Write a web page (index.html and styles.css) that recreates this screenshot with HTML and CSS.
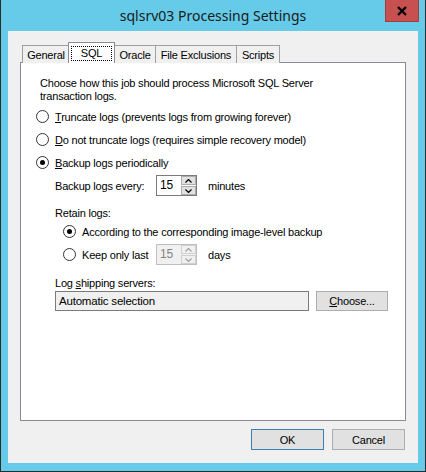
FILE: index.html
```html
<!DOCTYPE html>
<html lang="en">
<head>
  <meta charset="UTF-8" />
  <title>sqlsrv03 Processing Settings</title>
  <link rel="stylesheet" href="styles.css">
</head>
<body>

<div class="window">
  <div class="titlebar">
    <span class="title">sqlsrv03 Processing Settings</span>
    <button class="close-btn" aria-label="Close">
      <svg width="12" height="10" viewBox="0 0 12 10">
        <path d="M2 1 L10 9 M10 1 L2 9" stroke="#000" stroke-width="2.4" />
      </svg>
    </button>
  </div>

  <div class="client">
    <div class="tabs">
      <div class="tab tab-general">General</div>
      <div class="tab tab-sql active"><span class="focus">SQL</span></div>
      <div class="tab tab-oracle">Oracle</div>
      <div class="tab tab-excl">File Exclusions</div>
      <div class="tab tab-scripts">Scripts</div>
    </div>

    <div class="panel">
      <p class="intro">Choose how this job should process Microsoft SQL Server<br>transaction logs.</p>

      <div class="radio-row">
        <span class="radio"></span>
        <span><u>T</u>runcate logs (prevents logs from growing forever)</span>
      </div>
      <div class="radio-row">
        <span class="radio"></span>
        <span><u>D</u>o not truncate logs (requires simple recovery model)</span>
      </div>
      <div class="radio-row">
        <span class="radio checked"></span>
        <span><u>B</u>ackup logs periodically</span>
      </div>

      <div class="sub">
        <div class="spin-row">
          <span class="spin-label">Backup logs every:</span>
          <div class="spin">
            <span class="spin-value">15</span>
            <div class="spin-btns">
              <span class="spin-btn">
                <svg width="7" height="4" viewBox="0 0 7 4"><path d="M0.5 3.5 L3.5 0.5 L6.5 3.5" fill="none" stroke="#000" stroke-width="1.2" /></svg>
              </span>
              <span class="spin-btn">
                <svg width="7" height="4" viewBox="0 0 7 4"><path d="M0.5 0.5 L3.5 3.5 L6.5 0.5" fill="none" stroke="#000" stroke-width="1.2" /></svg>
              </span>
            </div>
          </div>
          <span class="unit">minutes</span>
        </div>

        <div class="label retain">Retain logs:</div>
        <div class="inner">
          <div class="radio-row">
            <span class="radio checked"></span>
            <span>According to the corresponding image-level backup</span>
          </div>
          <div class="radio-row">
            <span class="radio"></span>
            <span class="keep-label">Keep only last</span>
            <div class="spin disabled">
              <span class="spin-value">15</span>
              <div class="spin-btns">
                <span class="spin-btn">
                  <svg width="7" height="4" viewBox="0 0 7 4"><path d="M0.5 3.5 L3.5 0.5 L6.5 3.5" fill="none" stroke="#a0a0a0" stroke-width="1.2" /></svg>
                </span>
                <span class="spin-btn">
                  <svg width="7" height="4" viewBox="0 0 7 4"><path d="M0.5 0.5 L3.5 3.5 L6.5 0.5" fill="none" stroke="#a0a0a0" stroke-width="1.2" /></svg>
                </span>
              </div>
            </div>
            <span class="unit">days</span>
          </div>
        </div>

        <div class="label shipping">Log <u>s</u>hipping servers:</div>
        <div class="field-row">
          <div class="field">Automatic selection</div>
          <button class="btn choose"><u>C</u>hoose...</button>
        </div>
      </div>
    </div>

    <div class="footer">
      <button class="btn default">OK</button>
      <button class="btn">Cancel</button>
    </div>
  </div>
</div>

</body>
</html>
```

FILE: styles.css
```css
* { box-sizing: border-box; }

body {
  margin: 0;
  font-family: 'Liberation Sans', Arial, sans-serif;
  font-size: 11px;
  letter-spacing: -0.2px;
  color: #000;
}

.window {
  width: 426px;
  height: 472px;
  background: #65cbe9;
  border: 1px solid #2b2b2b;
  border-top: none;
  padding: 0 7px 8px 7px;
  display: flex;
  flex-direction: column;
  position: relative;
}

.titlebar {
  height: 31px;
  display: flex;
  justify-content: center;
  align-items: center;
  padding-bottom: 1px;
}

.title {
  font-family: 'Noto Sans', sans-serif;
  font-size: 14px;
  letter-spacing: 0;
  color: #1a1a1a;
}

.close-btn {
  position: absolute;
  top: 0;
  right: 6px;
  width: 34px;
  height: 22px;
  background: #c75050;
  border: 1px solid #a53c3c;
  border-top: none;
  padding: 0;
  display: flex;
  align-items: center;
  justify-content: center;
}

.client {
  flex: 1;
  background: #f0f0f0;
  padding: 12px 12px 0 12px;
  display: flex;
  flex-direction: column;
}

.tabs {
  display: flex;
  align-items: flex-end;
  height: 20px;
  padding-left: 2px;
  position: relative;
  z-index: 1;
  margin-bottom: -1px;
}

.tab {
  height: 18px;
  border: 1px solid #a0a0a0;
  border-bottom: none;
  background: #f0f0f0;
  display: flex;
  align-items: center;
  justify-content: center;
  margin-left: -1px;
  padding-top: 1px;
}

.tab:first-child { margin-left: 0; }

.tab-general { width: 48px; }
.tab-oracle { width: 42px; }
.tab-excl { width: 82px; }
.tab-scripts { width: 44px; }

.tab.active {
  width: 47px;
  height: 21px;
  background: #fff;
  border-color: #898c95;
  margin-left: -2px;
  margin-right: -1px;
  position: relative;
  z-index: 2;
  align-items: flex-start;
  padding-top: 3px;
}

.tab.active + .tab { margin-left: 0; }

.focus {
  border: 1px dotted #000;
  width: 41px;
  height: 15px;
  text-align: center;
  line-height: 13px;
}

.panel {
  height: 359px;
  background: #fff;
  border: 1px solid #898c95;
  padding: 14px 15px 0 15px;
}

.intro {
  margin: 0 0 2px 4px;
  line-height: 13px;
}

.radio-row {
  height: 23px;
  display: flex;
  align-items: center;
}

.radio {
  width: 13px;
  height: 13px;
  border: 1px solid #333;
  border-radius: 50%;
  background: #fff;
  margin-right: 6px;
  flex-shrink: 0;
  display: flex;
  align-items: center;
  justify-content: center;
}

.radio.checked::after {
  content: "";
  width: 5px;
  height: 5px;
  border-radius: 50%;
  background: #000;
}

.sub { padding-left: 19px; }

.spin-row {
  height: 21px;
  margin-top: 1px;
  display: flex;
  align-items: center;
}

.spin-label { width: 101px; }
.keep-label { width: 74px; }

.spin {
  width: 41px;
  height: 21px;
  border: 1px solid #7a7a7a;
  background: #fff;
  display: flex;
}

.spin-value {
  flex: 1;
  padding-left: 3px;
  font-size: 12px;
  line-height: 19px;
}

.spin-btns {
  width: 15px;
  display: flex;
  flex-direction: column;
  gap: 1px;
  padding: 0 0 0 0;
}

.spin-btn {
  flex: 1;
  background: #e1e1e1;
  border: 1px solid #acacac;
  display: flex;
  align-items: center;
  justify-content: center;
}

.spin.disabled {
  border-color: #bfbfbf;
  background: #f0f0f0;
  color: #838383;
}

.spin.disabled .spin-btn {
  background: #f0f0f0;
  border-color: #d0d0d0;
}

.unit { margin-left: 11px; }

.label {
  height: 14px;
  line-height: 14px;
  margin-top: 10px;
}

.inner .radio-row { padding-left: 8px; }
.inner .radio-row:first-child { height: 23px; }

.field-row {
  display: flex;
  gap: 7px;
  margin-top: 1px;
}

.field {
  width: 254px;
  height: 20px;
  border: 1px solid #7a7a7a;
  background: #f0f0f0;
  padding-left: 3px;
  font-size: 11.5px;
  line-height: 18px;
}

.btn {
  font-family: 'Liberation Sans', Arial, sans-serif;
  font-size: 11px;
  letter-spacing: -0.2px;
  background: #e1e1e1;
  border: 1px solid #adadad;
  height: 20px;
  padding: 0;
  color: #000;
}

.choose { width: 72px; }

.footer {
  display: flex;
  justify-content: flex-end;
  gap: 8px;
  margin-top: 8px;
  padding-right: 1px;
}

.footer .btn {
  width: 73px;
  height: 21px;
}

.btn.default { border-color: #3c7fb1; }
```
